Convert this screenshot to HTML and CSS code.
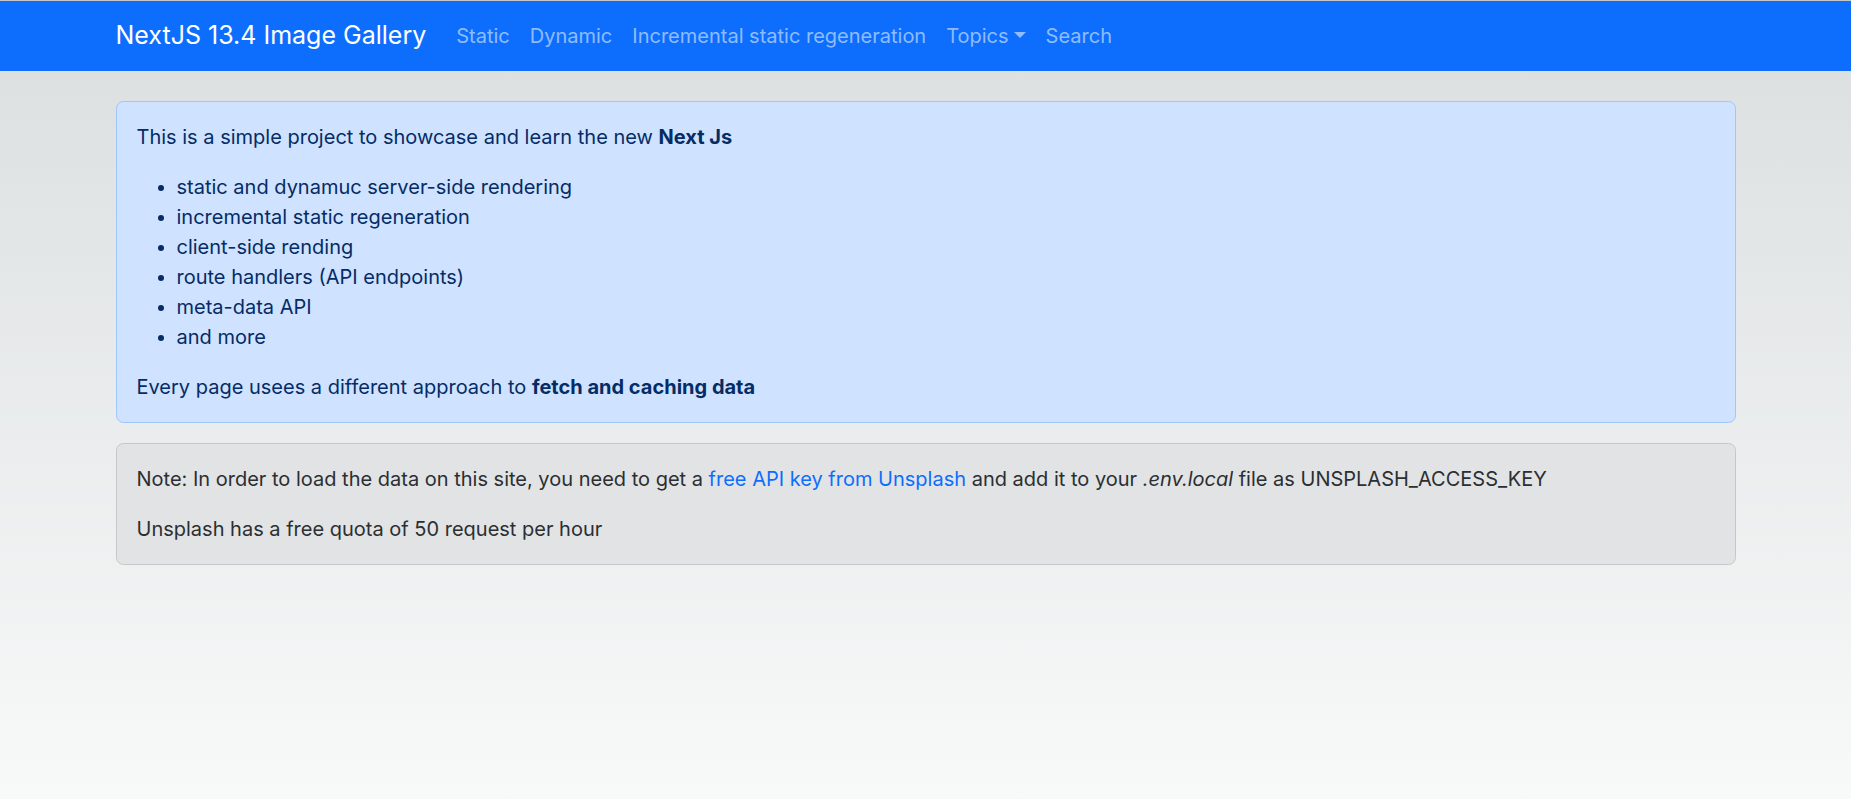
FILE: index.html
```html
<!DOCTYPE html>
<html lang="en">
<head>
<meta charset="utf-8">
<title>NextJS 13.4 Image Gallery</title>
<link rel="stylesheet" href="styles.css">
</head>
<body>
<nav class="navbar">
  <div class="container nav-inner">
    <a class="brand" href="#">NextJS 13.4 Image Gallery</a>
    <ul class="nav-links">
      <li><a class="nav-link" href="#">Static</a></li>
      <li><a class="nav-link" href="#">Dynamic</a></li>
      <li><a class="nav-link" href="#">Incremental static regeneration</a></li>
      <li><a class="nav-link dropdown-toggle" href="#">Topics</a></li>
      <li><a class="nav-link" href="#">Search</a></li>
    </ul>
  </div>
</nav>
<main class="container main">
  <div class="alert alert-primary">
    <p>This is a simple project to showcase and learn the new <strong>Next Js</strong></p>
    <ul class="features">
      <li>static and dynamuc server-side rendering</li>
      <li>incremental static regeneration</li>
      <li>client-side rending</li>
      <li>route handlers (API endpoints)</li>
      <li>meta-data API</li>
      <li>and more</li>
    </ul>
    <p class="last">Every page usees a different approach to <strong>fetch and caching data</strong></p>
  </div>
  <div class="alert alert-secondary">
    <p>Note: In order to load the data on this site, you need to get a <a class="link" href="#">free API key from Unsplash</a> and add it to your <em>.env.local</em> file as UNSPLASH_ACCESS_KEY</p>
    <p class="last">Unsplash has a free quota of 50 request per hour</p>
  </div>
</main>
</body>
</html>
```
FILE: styles.css
```css
* { box-sizing: border-box; }
html { height: 100%; }
body {
  margin: 0;
  min-height: 100%;
  font-family: Inter, "Noto Sans", "Liberation Sans", sans-serif;
  font-size: 20px;
  line-height: 30px;
  color: #212529;
  border-top: 1px solid #c4c6c8;
  background: linear-gradient(to bottom, #dadedf 0%, #f8f9f9 100%);
  background-attachment: fixed;
}
.container {
  max-width: 1650px;
  margin: 0 auto;
  padding: 0 15px;
}
.navbar {
  background: #0d6efd;
  padding: 10px 0;
}
.nav-inner {
  display: flex;
  align-items: center;
}
.brand {
  color: #fff;
  text-decoration: none;
  font-size: 25px;
  line-height: 37.5px;
  padding: 6.25px 0;
  margin-right: 20px;
}
.nav-links {
  display: flex;
  list-style: none;
  margin: 0;
  padding: 0;
}
.nav-link {
  display: block;
  padding: 10px 10px;
  color: rgba(255, 255, 255, 0.55);
  text-decoration: none;
}
.dropdown-toggle::after {
  content: "";
  display: inline-block;
  margin-left: 5px;
  vertical-align: 5px;
  border-top: 6px solid;
  border-left: 6px solid transparent;
  border-right: 6px solid transparent;
  border-bottom: 0;
}
.main { padding-top: 30px; }
.alert {
  border: 1px solid transparent;
  border-radius: 7.5px;
  padding: 20px;
  margin-bottom: 20px;
}
.alert p { margin: 0 0 20px; }
.alert p.last { margin-bottom: 0; }
.alert-primary {
  background: #cfe2ff;
  border-color: #9ec5fe;
  color: #052c65;
}
.alert-secondary {
  background: #e2e3e5;
  border-color: #c4c8cb;
  color: #2b2f32;
}
.features {
  margin: 0 0 20px;
  padding-left: 40px;
}
strong { font-weight: 700; }
.link { color: #0d6efd; text-decoration: none; }
```
